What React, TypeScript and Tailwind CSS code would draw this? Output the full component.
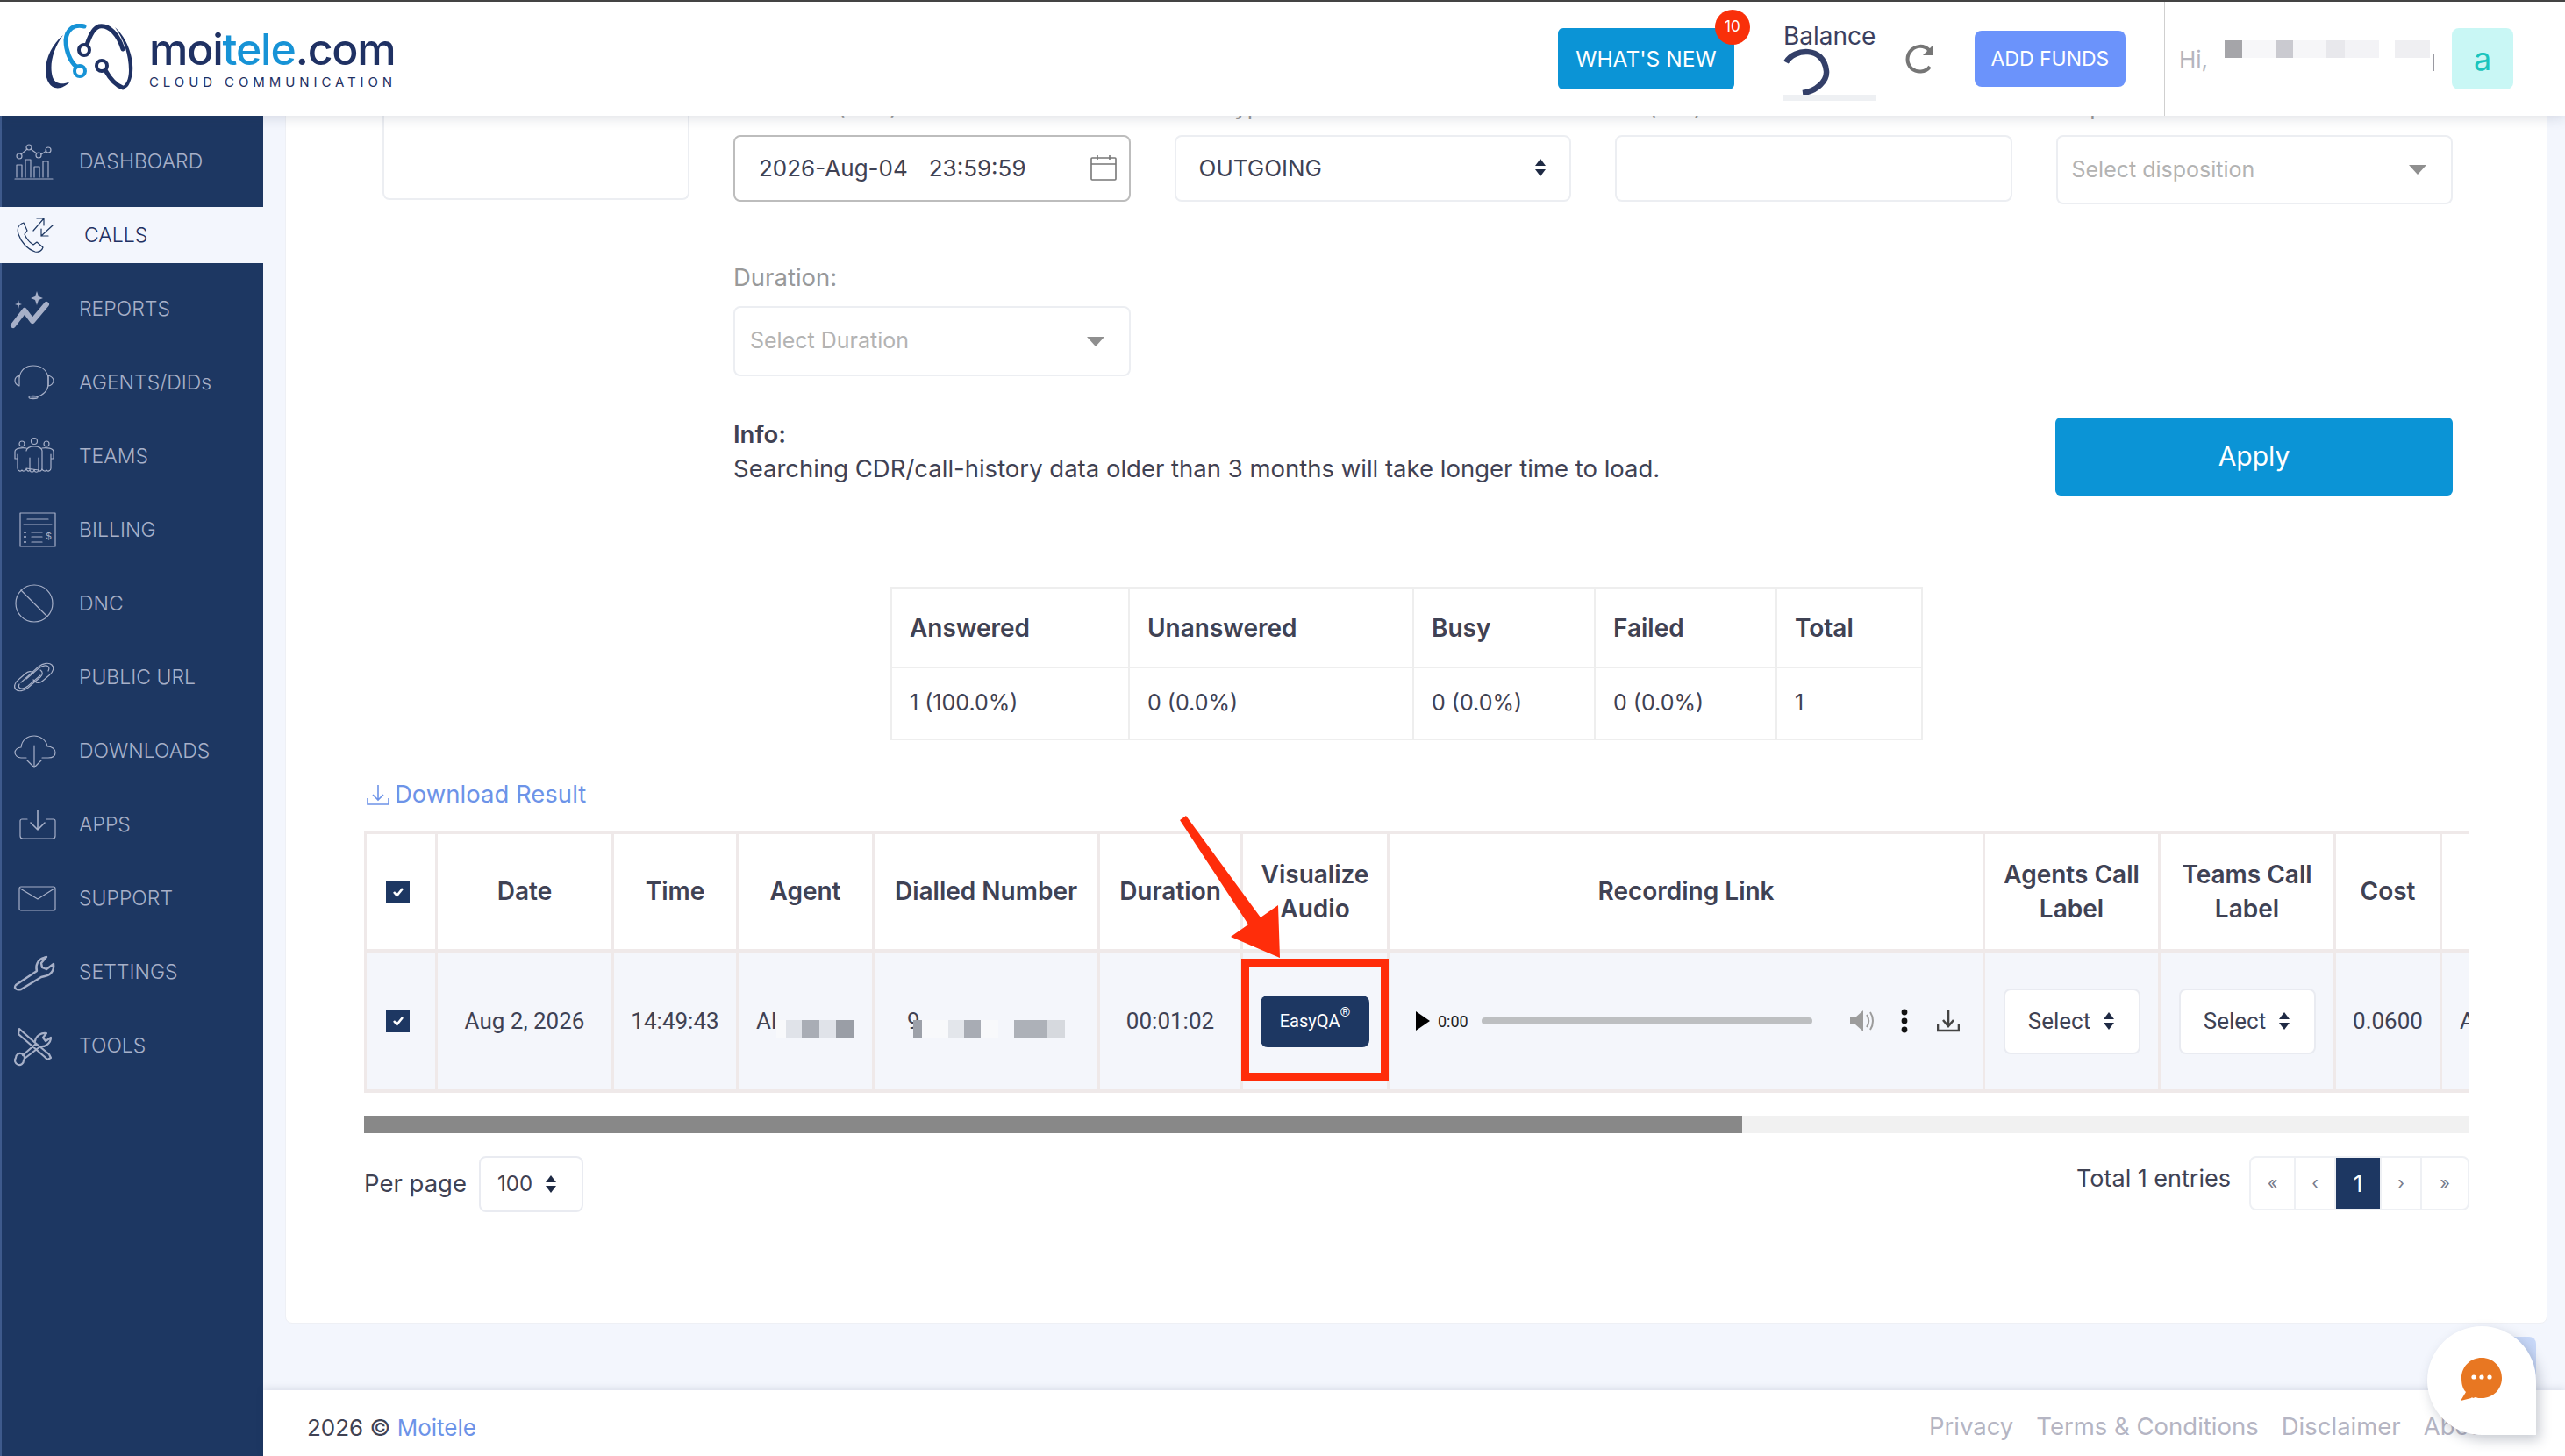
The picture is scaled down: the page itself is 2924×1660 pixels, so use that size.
import type { ReactNode } from 'react'

const stroke = { fill: 'none', stroke: '#a7b0c8', strokeWidth: 1.2, strokeLinecap: 'round', strokeLinejoin: 'round' } as const

function Ico({ children, dark }: { children: ReactNode; dark?: boolean }) {
  return (
    <svg width="48" height="44" viewBox="0 0 48 44" className="shrink-0 overflow-visible" {...stroke} stroke={dark ? '#1d3762' : '#a7b0c8'}>
      {children}
    </svg>
  )
}

const NAV: { label: string; icon: ReactNode }[] = [
  {
    label: 'DASHBOARD',
    icon: (
      <Ico>
        <path d="M1 42h43M3 40V26h6v14M13 40V20h6v20M23 40V28h6v12M33 40V22h6v18" />
        <circle cx="6" cy="16" r="3" /><circle cx="17" cy="6" r="3" /><circle cx="28" cy="15" r="3" /><circle cx="39" cy="9" r="3" />
        <path d="M8 14l7-6M19 8l7 5M31 14l6-4" />
      </Ico>
    ),
  },
  {
    label: 'CALLS',
    icon: (
      <Ico dark>
        <path d="M11 8C5 10 3 15 5 21c3 9 10 17 19 20 4 1 8-1 9-5l-7-6-4 3c-5-3-8-7-10-12l3-4z" />
        <path d="M22 17L34 3M26 3h8v8M44 11L31 23M31 15v8h8" />
      </Ico>
    ),
  },
  {
    label: 'REPORTS',
    icon: (
      <Ico>
        <path d="M-1 41L12 24l9 12 16-19" fill="none" strokeWidth="6" stroke="#a7b0c8" />
        <path d="M26 2l2 6 5 2-5 2-2 6-2-6-5-2 5-2zM5 12l1 4 3 1-3 1-1 4-1-4-3-1 3-1z" fill="#a7b0c8" strokeWidth="0" />
      </Ico>
    ),
  },
  {
    label: 'AGENTS/DIDs',
    icon: (
      <Ico>
        <path d="M6 16C8 7 14 3 22 3s15 4 17 13v8c0 7-6 13-14 15h-5" />
        <path d="M6 14c-3 1-5 3-5 6s2 5 5 6zM39 14c3 1 6 3 6 6s-3 6-6 6z" />
        <ellipse cx="22" cy="39" rx="5" ry="1.6" />
      </Ico>
    ),
  },
  {
    label: 'TEAMS',
    icon: (
      <Ico>
        <circle cx="23" cy="5" r="3.5" /><circle cx="9" cy="8" r="3" /><circle cx="37" cy="8" r="3" />
        <path d="M14 16c0-3 4-5 9-5s9 2 9 5v20c0 3-3 4-4 2v-14M28 38c-1 3-4 3-5 0-1 3-4 3-5 0-1 2-4 1-4-2zM18 24v14" />
        <path d="M14 13c-5-1-13 0-13 4v8h3M4 20v16c0 3 4 4 5 2 1 2 4 1 5-1M32 13c5-1 13 0 13 4v8h-3M42 20v16c0 3-4 4-5 2-1 2-4 1-5-1" />
      </Ico>
    ),
  },
  {
    label: 'BILLING',
    icon: (
      <Ico>
        <rect x="7" y="3" width="40" height="38" />
        <path d="M15 10h24M11 16h32M20 25h12M20 30h12M20 36h12" />
        <path d="M12 25h1M12 30h1M12 36h1" strokeWidth="2" />
        <text x="36" y="33" fill="#a7b0c8" stroke="none" fontSize="11" fontFamily="Inter, sans-serif">$</text>
      </Ico>
    ),
  },
  {
    label: 'DNC',
    icon: (
      <Ico>
        <circle cx="23" cy="22" r="21" />
        <path d="M8 7l30 30" />
      </Ico>
    ),
  },
  {
    label: 'PUBLIC URL',
    icon: (
      <Ico>
        <path d="M8 28l20-18c5-4 12-5 15-2s2 8-3 12L33 26c-3 3-7 3-9 1l-2-2" />
        <path d="M39 15c1-2 1-4 0-5-2-2-7-1-11 2L14 24" />
        <path d="M30 14c3 2 3 5 0 8L16 34c-5 4-11 5-14 2s-1-8 4-12l7-6c3-3 7-3 9-1" />
        <path d="M6 30c-1 2-1 3 0 4 2 2 6 1 10-2l14-12" />
      </Ico>
    ),
  },
  {
    label: 'DOWNLOADS',
    icon: (
      <Ico>
        <path d="M14 30H8c-4 0-7-3-7-6s3-6 7-6c1-9 8-13 15-13s14 5 15 12c5 0 9 3 9 7s-3 6-8 6H32" />
        <path d="M23 16v25M15 33l8 8 8-8" />
      </Ico>
    ),
  },
  {
    label: 'APPS',
    icon: (
      <Ico>
        <path d="M15 16H9c-1 0-2 1-2 2v17c0 2 1 3 3 3h34c2 0 3-1 3-3V18c0-1-1-2-2-2h-8" />
        <path d="M27 6v22M19 20l8 8 8-8" strokeWidth="1.6" />
      </Ico>
    ),
  },
  {
    label: 'SUPPORT',
    icon: (
      <Ico>
        <rect x="6" y="9" width="41" height="27" rx="2" />
        <path d="M7 11l20 12 19-12" />
      </Ico>
    ),
  },
  {
    label: 'SETTINGS',
    icon: (
      <Ico>
        <path
          d="M2 37l24-16c-2-6 1-13 8-15l3-1-6 7 1 5 5 2 8-6c1 7-3 13-10 14l-4 1L8 42c-3 1-6 0-7-2 0-1 0-2 1-3z"
          strokeWidth="2.4"
        />
      </Ico>
    ),
  },
  {
    label: 'TOOLS',
    icon: (
      <Ico>
        <path d="M6 3l17 15 17 14 2 4-4 2-3-3-30-26zM2 36a5 5 0 1 0 9 3 5 5 0 1 0-9-3zM10 33l15-13" strokeWidth="2.2" />
        <path d="M24 17c1-6 7-10 13-9l-4 5 3 4 6-4c0 6-6 11-12 10L13 36" strokeWidth="2.2" />
      </Ico>
    ),
  },
]

const Updown = () => (
  <svg width="14" height="22" viewBox="0 0 14 22" className="shrink-0" fill="#1f2a44">
    <path d="M7 1l6 8H1zM7 21l-6-8h12z" />
  </svg>
)

const Caret = () => (
  <svg width="20" height="11" viewBox="0 0 20 11" className="shrink-0" fill="#8f8f8f">
    <path d="M0 0h20L10 11z" />
  </svg>
)

const Check = () => (
  <span className="ml-[22px] flex h-[26px] w-[27px] items-center justify-center bg-[#1d3762]">
    <svg width="14" height="12" viewBox="0 0 14 12" fill="none" stroke="#fff" strokeWidth="2.6">
      <path d="M2 6l3.5 4L12 2" />
    </svg>
  </span>
)

const Pixels = ({ items }: { items: [number, string][] }) => (
  <span className="inline-flex h-[20px] align-middle">
    {items.map(([w, c], i) => (
      <span key={i} className="h-full" style={{ width: w, backgroundColor: c }} />
    ))}
  </span>
)

const COLS = [81, 201, 142, 155, 257, 163, 167, 679, 200, 200, 121, 200]
const HEAD = ['', 'Date', 'Time', 'Agent', 'Dialled Number', 'Duration', 'Visualize Audio', 'Recording Link', 'Agents Call Label', 'Teams Call Label', 'Cost', 'Agent']

const RowSelect = () => (
  <div className="mx-auto flex h-[75px] w-[156px] items-center justify-center gap-[14px] rounded-lg border-2 border-[#e9ebf1] bg-white">
    Select <Updown />
  </div>
)

function Header() {
  return (
    <header className="relative z-20 flex h-[132px] shrink-0 items-stretch border-t-2 border-[#444] bg-white pl-[50px] shadow-[0_2px_14px_rgba(40,50,80,0.16)]">
      <div className="flex items-center">
        <svg width="106" height="76" viewBox="50 30 106 76" className="-mt-[4px] shrink-0" fill="none" strokeLinecap="round">
          <path d="M72 43C56 56 46 82 56 98c4 7 15 8 24-2-9 4-17 3-20-5-4-13 0-32 12-48z" fill="#1f3163" />
          <path d="M96 33c-11-3-20 3-21 16 0 12 5 24 12 30" stroke="#1793d6" strokeWidth="5" />
          <circle cx="91" cy="84" r="6" stroke="#1793d6" strokeWidth="4" />
          <circle cx="96" cy="60" r="6" stroke="#1f3163" strokeWidth="4" />
          <path d="M99 54c3-9 7-19 14-21 12-2 22 10 27 26" stroke="#1f3163" strokeWidth="5" />
          <path d="M131 34c15 13 26 43 17 63-2 6-7 9-12 6 8-2 11-10 11-20 0-17-6-36-16-49z" fill="#1f3163" />
          <circle cx="116" cy="78" r="6" stroke="#1f3163" strokeWidth="4" />
          <path d="M120 83c5 9 11 17 20 20" stroke="#1f3163" strokeWidth="5" />
        </svg>
        <div className="ml-[14px] flex flex-col">
          <div className="text-[50px] leading-[50px] font-medium tracking-[-1.2px] text-[#1f3163]">
            moi<span className="text-[#1793d6]">tele</span>.com
          </div>
          <div className="mt-[4px] text-[15px] leading-[18px] tracking-[4.9px] text-[#1f3163]">CLOUD COMMUNICATION</div>
        </div>
      </div>

      <div className="ml-auto flex items-center pr-[59px]">
        <div className="relative flex h-[70px] w-[201px] items-center justify-center rounded-md bg-[#0b94d6] text-[24.5px] text-white">
          WHAT'S NEW
          <span className="absolute -top-[21px] -right-[18px] flex h-[40px] w-[40px] items-center justify-center rounded-full bg-[#f9300a] text-[17px]">
            10
          </span>
        </div>
        <div className="ml-[56px] flex w-[106px] flex-col pt-[4px]">
          <span className="text-[28px] leading-[34px] text-[#3a3f60]">Balance</span>
          <svg width="54" height="54" viewBox="0 0 54 54" fill="none" className="-mt-[4px]">
            <path d="M3 17C12 1 46-2 49 27c1 11-11 23-27 25" stroke="#333f68" strokeWidth="6.5" />
          </svg>
          <span className="h-[7px] w-full bg-[#eef0f3]" />
        </div>
        <svg width="36" height="36" viewBox="0 0 36 36" fill="none" stroke="#767676" strokeWidth="4" className="ml-[32px]">
          <path d="M28 8C22 2 13 3 8 8c-6 6-6 15 0 21 6 5 16 5 21-2" />
          <path d="M33 2v12H21z" fill="#767676" stroke="none" />
        </svg>
        <div className="ml-[44px] flex h-[64px] w-[172px] items-center justify-center rounded-lg bg-[#6b93fb] text-[23px] text-white">ADD FUNDS</div>
        <div className="ml-[44px] flex h-full items-center border-l border-[#cfcfcf] pl-[16px]">
          <span className="text-[26px] text-[#b5b5be]">Hi,</span>
          <span className="mb-[26px] ml-[19px]">
            <Pixels items={[[20, '#a5a5a9'], [39, '#f7f7f9'], [19, '#cacad0'], [38, '#f6f6f8'], [21, '#e8e8ec'], [39, '#f3f3f6'], [18, '#ffffff'], [40, '#efeff2']]} />
          </span>
          <span className="mt-[8px] ml-[3px] h-[20px] w-[2px] bg-[#9a9aa2]" />
          <div className="ml-[20px] flex h-[70px] w-[70px] items-center justify-center rounded-lg bg-[#c9f7f5] text-[36px] text-[#1bc5bd]">a</div>
        </div>
      </div>
    </header>
  )
}

function Sidebar() {
  return (
    <aside className="flex w-[300px] shrink-0 flex-col gap-5 border-l-2 border-[#3e5a8c] bg-[#1d3762] pt-[20px]">
      {NAV.map((n) => {
        const active = n.label === 'CALLS'
        return (
          <div key={n.label} className={`flex h-[64px] items-center pl-[14px] ${active ? '-ml-[2px] bg-[#f3f6fd] pl-[16px] text-[#1f3163]' : 'text-[#a7b0c8]'}`}>
            {n.icon}
            <span className={`text-[23px] font-light ${active ? 'ml-[32px]' : 'ml-[26px]'}`}>{n.label}</span>
          </div>
        )
      })}
    </aside>
  )
}

function Filters() {
  return (
    <div className="flex items-start pl-[110px]">
      <div className="mt-0 h-[135px] w-[350px] shrink-0 rounded-b-lg border-2 border-t-0 border-[#eceef2]" />
      <div className="ml-[50px] w-[1960px] pt-[10px]">
        <div className="grid grid-cols-4 gap-x-[50px]">
          {['End Date (EDT):', 'Call Type:', 'To (No.):', 'Disposition:'].map((l) => (
            <div key={l} className="h-[51px] text-[26px] leading-[38px] text-[#999]">{l}</div>
          ))}
          <div className="flex h-[76px] items-center justify-between rounded-lg border-2 border-[#bdbdbd] pr-[14px] pb-[2px] pl-[27px] text-[26px] text-[#3f4254]">
            <span className="flex gap-[24px]"><span>2026-Aug-04</span><span>23:59:59</span></span>
            <svg width="30" height="30" viewBox="0 0 30 30" fill="none" stroke="#777" strokeWidth="1.6">
              <rect x="1" y="4" width="28" height="25" rx="1" />
              <path d="M1 11h28M8 1v5M22 1v5" />
            </svg>
          </div>
          <div className="flex h-[76px] items-center justify-between rounded-lg border-2 border-[#eceef2] pr-[26px] pb-[2px] pl-[26px] text-[26px] text-[#3f4254]">
            OUTGOING <Updown />
          </div>
          <div className="h-[76px] rounded-lg border-2 border-[#eceef2]" />
          <div className="flex h-[79px] items-center justify-between rounded-lg border-2 border-[#eceef2] pr-[28px] pl-[16px] text-[25px] text-[#b3b3b3]">
            Select disposition <Caret />
          </div>
        </div>

        <div className="mt-[64px] text-[27.5px] leading-[38px] text-[#999]">Duration:</div>
        <div className="mt-[14px] flex h-[80px] w-[453px] items-center justify-between rounded-lg border-2 border-[#eceef2] pr-[28px] pl-[17px] text-[25px] text-[#b3b3b3]">
          Select Duration <Caret />
        </div>

        <div className="mt-[47px] flex items-start justify-between">
          <div className="text-[27.5px] leading-[39px] text-[#3f4254]">
            <div className="font-semibold">Info:</div>
            <div>Searching CDR/call-history data older than 3 months will take longer time to load.</div>
          </div>
          <div className="flex h-[89px] w-[453px] items-center justify-center rounded-md bg-[#0b94d6] text-[30px] text-white">Apply</div>
        </div>
      </div>
    </div>
  )
}

function Stats() {
  const cols: [string, string, string][] = [
    ['w-[271px]', 'Answered', '1 (100.0%)'],
    ['w-[324px]', 'Unanswered', '0 (0.0%)'],
    ['w-[207px]', 'Busy', '0 (0.0%)'],
    ['w-[207px]', 'Failed', '0 (0.0%)'],
    ['w-[166px]', 'Total', '1'],
  ]
  return (
    <table className="mt-[104px] ml-[689px] table-fixed border-collapse text-[#3f4254]">
      <tbody>
        <tr className="h-[91px]">
          {cols.map(([w, h]) => (
            <th key={h} className={`${w} border-2 border-[#eee] pl-[20px] text-left text-[28px] font-semibold`}>{h}</th>
          ))}
        </tr>
        <tr className="h-[82px]">
          {cols.map(([, h, v]) => (
            <td key={h} className="border-2 border-[#eee] pl-[20px] text-[25px]">{v}</td>
          ))}
        </tr>
      </tbody>
    </table>
  )
}

function Player() {
  return (
    <div className="flex items-center pl-[30px]">
      <svg width="16" height="22" viewBox="0 0 16 22" fill="#000" className="shrink-0"><path d="M0 0l16 11L0 22z" /></svg>
      <span className="ml-[9px] text-[18px] text-[#222]">0:00</span>
      <span className="ml-[15px] h-[8px] w-[377px] rounded-full bg-[#bdbfc1]" />
      <svg width="28" height="26" viewBox="0 0 28 26" className="ml-[42px] shrink-0" fill="#9c9c9c">
        <path d="M1 9h6l9-8v24l-9-8H1z" />
        <path d="M20 6c3 4 3 10 0 14M24 3c4 6 4 14 0 20" fill="none" stroke="#9c9c9c" strokeWidth="2" />
      </svg>
      <svg width="8" height="28" viewBox="0 0 8 28" fill="#111" className="ml-[31px] shrink-0">
        <circle cx="4" cy="4" r="3.4" /><circle cx="4" cy="14" r="3.4" /><circle cx="4" cy="24" r="3.4" />
      </svg>
      <svg width="26" height="26" viewBox="0 0 26 26" fill="none" stroke="#444" strokeWidth="2.6" className="ml-[33px] shrink-0">
        <path d="M13 1v17M7 12l6 7 6-7" /><path d="M1 16v8h24v-8" />
      </svg>
    </div>
  )
}

function ResultTable() {
  return (
    <div className="ml-[89px] w-[2400px] overflow-hidden">
      <table className="w-[2566px] table-fixed border-collapse border-y-4 border-[#efe9e9] text-[#3f4254]">
        <colgroup>
          {COLS.map((w, i) => <col key={i} style={{ width: w }} />)}
        </colgroup>
        <thead>
          <tr className="h-[135px] border-b-4 border-[#efe9e9] text-[28px] leading-[39px]">
            {HEAD.map((h, i) => (
              <th key={i} className={`border-x-[3px] border-[#efe9e9] font-semibold whitespace-normal ${i === 0 ? '' : 'px-[14px]'}`}>
                {i === 0 ? <Check /> : h}
              </th>
            ))}
          </tr>
        </thead>
        <tbody>
          <tr className="h-[160px] bg-[#f4f6fb] text-center font-['Roboto',sans-serif] text-[26px]">
            <td className="border-x-[3px] border-[#efe9e9]"><Check /></td>
            <td className="border-x-[3px] border-[#efe9e9]">Aug 2, 2026</td>
            <td className="border-x-[3px] border-[#efe9e9]">14:49:43</td>
            <td className="border-x-[3px] border-[#efe9e9] pl-[20px] text-left whitespace-nowrap">
              Al<span className="relative top-[7px]"><Pixels items={[[11, '#f8f9fb'], [18, '#e0e3e9'], [20, '#a9adb5'], [19, '#e0e3e9'], [20, '#9a9ea6']]} /></span>
            </td>
            <td className="border-x-[3px] border-[#efe9e9] pl-[37px] text-left whitespace-nowrap">
              9<span className="relative top-[7px] -ml-[8px]"><Pixels items={[[10, '#9da1a9'], [30, '#f8f9fb'], [18, '#e3e6eb'], [19, '#a8acb4'], [20, '#f8f9fb'], [18, '#f4f6fb'], [38, '#adb1b8'], [20, '#d6d9de']]} /></span>
            </td>
            <td className="border-x-[3px] border-[#efe9e9]">00:01:02</td>
            <td className="border-x-[3px] border-[#efe9e9]">
              <div className="mx-auto flex h-[59px] w-[124px] items-center justify-center rounded-lg bg-[#1d3762] text-[20px] text-white">
                EasyQA<sup className="-mt-[6px] text-[15px]">®</sup>
              </div>
            </td>
            <td className="border-x-[3px] border-[#efe9e9]"><Player /></td>
            <td className="border-x-[3px] border-[#efe9e9]"><RowSelect /></td>
            <td className="border-x-[3px] border-[#efe9e9]"><RowSelect /></td>
            <td className="border-x-[3px] border-[#efe9e9]">0.0600</td>
            <td className="border-x-[3px] border-[#efe9e9] pl-[20px] text-left">Agent</td>
          </tr>
        </tbody>
      </table>
      <div className="mt-[26px] h-[20px] w-full bg-[#f1f1f1]">
        <div className="h-full w-[1571px] bg-[#888]" />
      </div>
    </div>
  )
}

function Pager() {
  const cells: [string, string][] = [['«', 'w-[51px]'], ['‹', 'w-[46px]'], ['1', 'w-[52px]'], ['›', 'w-[46px]'], ['»', 'w-[52px]']]
  return (
    <div className="mt-[26px] ml-[89px] flex w-[2400px] items-start text-[#3f4254]">
      <span className="mt-[11px] text-[27.5px]">Per page</span>
      <div className="ml-[14px] flex h-[64px] w-[119px] items-center gap-[14px] rounded-lg border-2 border-[#e9ebf1] pl-[19px] text-[24px]">
        100 <Updown />
      </div>
      <span className="mt-[6px] ml-auto text-[27px]">Total 1 entries</span>
      <div className="ml-[21px] flex h-[62px] overflow-hidden rounded-lg border-2 border-[#eef0f4] text-[26px] text-[#777c8c]">
        {cells.map(([c, w]) => (
          <span key={c} className={`flex items-center justify-center border-r-2 border-[#eef0f4] last:border-r-0 ${w} ${c === '1' ? 'border-r-0 bg-[#1d3762] text-white' : 'text-[20px]'}`}>
            {c}
          </span>
        ))}
      </div>
    </div>
  )
}

export default function App() {
  return (
    <div className="relative flex h-[1660px] w-[2924px] flex-col overflow-hidden bg-[#f3f6fd] font-['Inter',sans-serif]">
      <Header />
      <div className="flex min-h-0 flex-1">
        <Sidebar />
        <div className="flex min-w-0 flex-1 flex-col">
          <main className="min-h-0 flex-1 overflow-hidden pr-[20px] pl-[25px]">
            <section className="-mt-[40px] h-[1417px] rounded-lg border border-[#eef0f5] bg-white">
              <Filters />
              <Stats />
              <div className="mt-[43px] ml-[91px] flex h-[38px] items-center text-[27.5px] text-[#6d93e8]">
                <svg width="28" height="28" viewBox="0 0 28 28" fill="none" stroke="#6d93e8" strokeWidth="1.6" className="mr-[5px]">
                  <path d="M14 3v17M8 14l6 6 6-6M2 18v7h24v-7" />
                </svg>
                Download Result
              </div>
              <div className="mt-[22px]"><ResultTable /></div>
              <Pager />
            </section>
          </main>
          <footer className="relative z-10 flex h-[75px] shrink-0 items-center justify-between bg-white pt-[9px] pl-[50px] shadow-[0_-2px_8px_rgba(40,50,80,0.12)]">
            <span className="text-[26px] text-[#3f4254]">2026 © <span className="text-[#6d93e8]">Moitele</span></span>
            <span className="flex gap-[26px] pr-[41px] text-[27.5px] text-[#b5b5c3]">
              <span>Privacy</span><span>Terms &amp; Conditions</span><span>Disclaimer</span><span>About Us</span>
            </span>
          </footer>
        </div>
      </div>

      {/* red annotation drawn on top of the screenshot */}
      <svg className="absolute top-[925px] left-[1340px] z-30" width="260" height="320" viewBox="1340 925 260 320" fill="#ff2d0a">
        <path d="M1345 935l7-5 85 116 20-14 2 60-56-24 20-14z" />
        <path d="M1415 1093h168v139h-168zM1424 1102v121h150v-121z" fillRule="evenodd" />
      </svg>

      {/* chat launcher */}
      <div className="absolute top-[1524px] left-[2840px] h-[60px] w-[51px] rounded-lg bg-[#c8d8f8]" />
      <div className="absolute top-[1512px] left-[2767px] z-30 flex h-[124px] w-[124px] items-center justify-center rounded-full rounded-br-[16px] bg-white shadow-[4px_6px_14px_rgba(40,50,80,0.25)]">
        <svg width="48" height="50" viewBox="0 0 48 50" className="-mt-[4px]">
          <path d="M24 1c13 0 23 10 23 23S37 47 24 47c-3 0-5 0-7-1l-3 1-1-1-1 1-12 3 6-10C2 36 1 30 1 24 1 11 11 1 24 1z" fill="#e87722" />
          <circle cx="15" cy="23" r="2.6" fill="#fff" /><circle cx="24" cy="23" r="2.6" fill="#fff" /><circle cx="33" cy="23" r="2.6" fill="#fff" />
        </svg>
      </div>
    </div>
  )
}
